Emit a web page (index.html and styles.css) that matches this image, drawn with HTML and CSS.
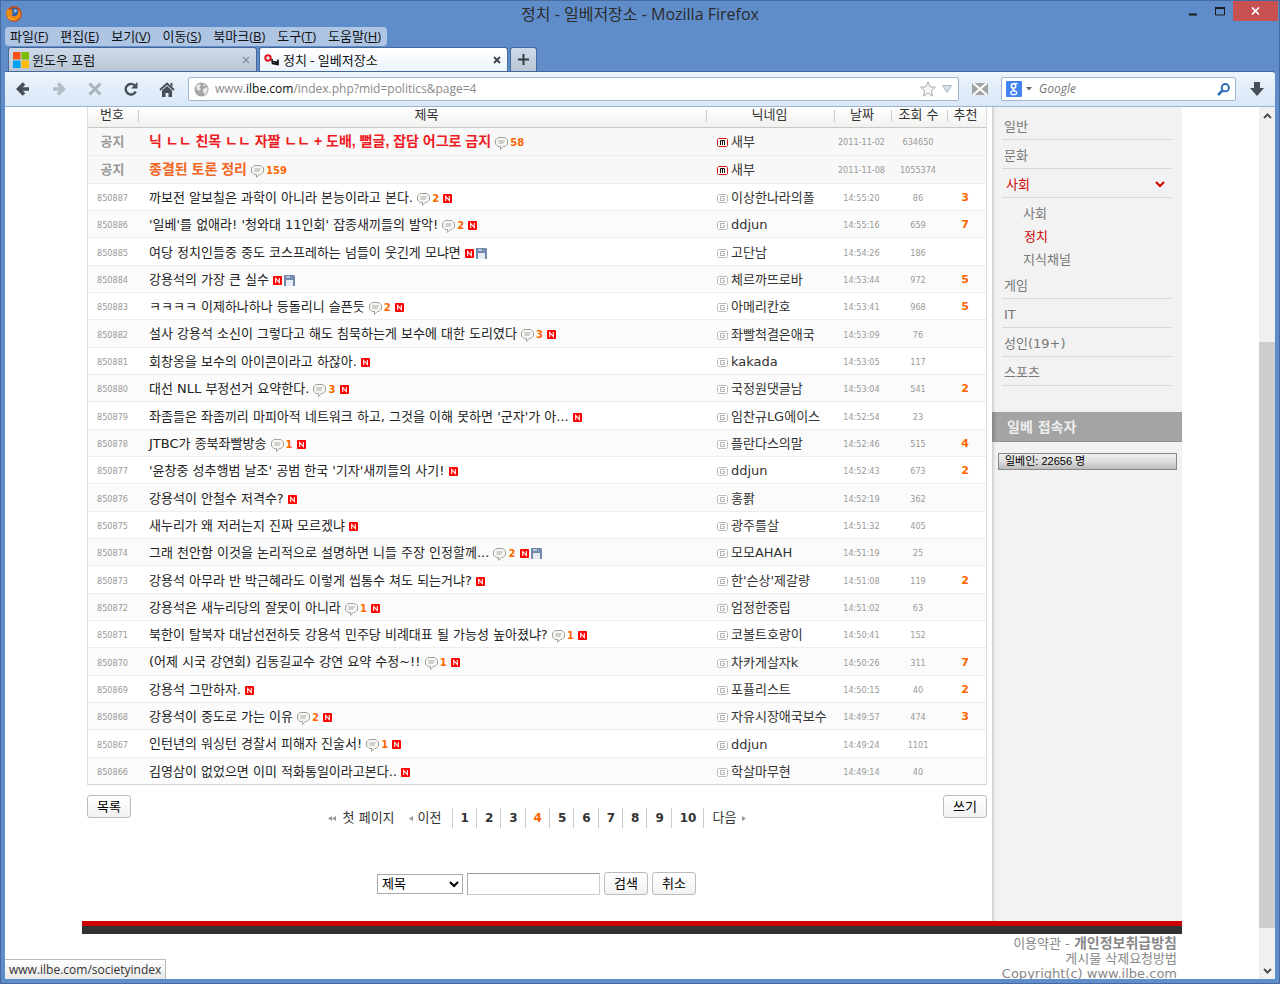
FILE: index.html
```html
<!DOCTYPE html>
<html lang="ko">
<head>
<meta charset="utf-8">
<title>정치 - 일베저장소</title>
<link rel="stylesheet" href="styles.css">
</head>
<body>
<svg class="defs" aria-hidden="true">
  <symbol id="talk" viewBox="0 0 13 13"><path d="M3 .5h7l2.500 2.500v4L10 9.500H8.500L5.500 12.300V9.500H3L.5 7V3z" fill="#f5f5f1" stroke="#a2a29e"/><path d="M3.500 4h6M3.500 6h5" stroke="#a8a8a8"/></symbol>
  <symbol id="new" viewBox="0 0 9 9"><rect width="9" height="9" rx="1" fill="#f00"/><path d="M2.700 7V2.500L6.300 6.500V2" fill="none" stroke="#fff" stroke-width="1.100"/></symbol>
  <symbol id="disk" viewBox="0 0 11 11"><path d="M0 0h10l1 1v10H0z" fill="#7089ad"/><path d="M2 1h6v2H2z" fill="#b9c7da"/><path d="M2 5h7v6H2z" fill="#e6ecf4"/><path d="M6 1h1.500v1.500H6z" fill="#46628c"/></symbol>
  <symbol id="g" viewBox="0 0 11 9"><path d="M1.500.5h8l1 1v6l-1 1h-8l-1-1v-6z" fill="#fff" stroke="#bbb"/><path d="M8 2.500H3.500v4h4v-2H5.500" fill="none" stroke="#b2b2b2"/></symbol>
  <symbol id="m" viewBox="0 0 11 9"><path d="M1.500.5h8l1 1v6l-1 1h-8l-1-1v-6z" fill="#fff" stroke="#e01010"/><path d="M3.500 7V2.500h4V7M5.500 2.500V7" fill="none" stroke="#111"/></symbol>
</svg>

<header class="titlebar">
  <svg class="fox" viewBox="0 0 16 16"><circle cx="8" cy="8" r="7.800" fill="#c9480c"/><circle cx="8.500" cy="7" r="5" fill="#2d5fa8"/><path d="M8 3l3 1-1 3-2-1z" fill="#86bce8"/><path d="M.6 4.500L2 2.500l1 1.500c1-.8 3-.7 4 .2L5.500 6l2 1.500-2 1.200c1 2.200 4 2 5.500.2 1.500-1.500 1.500-4 .5-6 2.500 1.800 4 5 2.500 8-2 4-8 4.700-11 2C0 11 0 7 .6 4.500z" fill="#f08a16"/><path d="M1.500 9c1 3.500 5 5 8.500 3.800-3 2.200-8 1-8.500-3.800z" fill="#fcc842"/></svg>
  <h1>정치 - 일베저장소 - Mozilla Firefox</h1>
  <div class="winbtns">
    <button class="win" aria-label="최소화"><svg width="10" height="10"><path d="M1 8.500h8" stroke="#1b1b1b" stroke-width="2"/></svg></button>
    <button class="win" aria-label="최대화"><svg width="10" height="10"><path d="M.5 1v8h9V1" fill="none" stroke="#1b1b1b"/><path d="M0 2h10" stroke="#1b1b1b" stroke-width="2"/></svg></button>
    <button class="win close" aria-label="닫기"><svg width="9" height="8"><path d="M1 .5l7 7M8 .5l-7 7" stroke="#fff" stroke-width="1.700"/></svg></button>
  </div>
</header>

<nav class="menubar">
  <button>파일(<u>F</u>)</button><button>편집(<u>E</u>)</button><button>보기(<u>V</u>)</button><button>이동(<u>S</u>)</button><button>북마크(<u>B</u>)</button><button>도구(<u>T</u>)</button><button>도움말(<u>H</u>)</button>
</nav>

<div class="tabs">
  <div class="tab">
    <svg width="16" height="16"><path d="M0 0h7.500v7.500H0z" fill="#f65314"/><path d="M8.500 0H16v7.500H8.500z" fill="#7cbb00"/><path d="M0 8.500h7.500V16H0z" fill="#00a1f1"/><path d="M8.500 8.500H16V16H8.500z" fill="#ffbb00"/></svg>
    <span>윈도우 포럼</span>
    <button class="x" aria-label="탭 닫기"><svg width="8" height="8"><path d="M1 1l6 6M7 1L1 7" stroke="#8c97a5" stroke-width="1.500"/></svg></button>
  </div>
  <div class="tab on">
    <svg width="16" height="16"><circle cx="4" cy="6" r="2.700" fill="none" stroke="#e5131d" stroke-width="2"/><path d="M8 7l.5 4.500 5.500 1V7.500M8.500 9.500l5 .8M11.500 9.500v2.500" fill="none" stroke="#111" stroke-width="1.700"/></svg>
    <span>정치 - 일베저장소</span>
    <button class="x" aria-label="탭 닫기"><svg width="8" height="8"><path d="M1 1l6 6M7 1L1 7" stroke="#3c434a" stroke-width="1.800"/></svg></button>
  </div>
  <button class="plus" aria-label="새 탭"><svg width="11" height="11"><path d="M5.500 0v11M0 5.500h11" stroke="#333b44" stroke-width="2"/></svg></button>
</div>

<div class="toolbar">
  <button class="tool" aria-label="뒤로"><svg width="14" height="14"><path d="M13 7H4M8 1.500L2.500 7 8 12.500" fill="none" stroke="#454e59" stroke-width="3.600"/></svg></button>
  <button class="tool" aria-label="앞으로"><svg width="14" height="14"><path d="M1 7h9M6 1.500L11.500 7 6 12.500" fill="none" stroke="#b2bdc9" stroke-width="3.400"/></svg></button>
  <button class="tool" aria-label="중지"><svg width="14" height="14"><path d="M1.500 1.500l11 11M12.500 1.500l-11 11" stroke="#a9b3bf" stroke-width="3"/></svg></button>
  <button class="tool" aria-label="새로 고침"><svg width="14" height="14"><path d="M10.500 3.200A5.300 5.300 0 1 0 11.800 9.500" fill="none" stroke="#454e59" stroke-width="2.400"/><path d="M13.500 0v6.500H7z" fill="#454e59"/></svg></button>
  <button class="tool" aria-label="홈"><svg width="16" height="15"><path d="M1 8l7-6.500L15 8" fill="none" stroke="#454e59" stroke-width="2"/><path d="M3 8.500l5-4.600 5 4.600V15H9.500v-4h-3v4H3zM11.500 1H13.500v4l-2-2z" fill="#454e59"/></svg></button>
  <div class="field url">
    <svg width="15" height="15"><circle cx="7.500" cy="7.500" r="7" fill="#a5a5a5"/><path d="M2 4c2-2 4-2 5-1L5.500 5.500 7 7 5 9 2.500 7zM9 7l4-2 .8 3-2.500 5L9 10zM9 1.500l3 2-2 1z" fill="#e6e6e6"/></svg>
    <span class="address">www.<b>ilbe.com</b>/index.php?mid=politics&amp;page=4</span>
    <svg width="16" height="16"><path d="M8 1l2.100 4.800 5.200.5-3.900 3.500 1.100 5.200L8 12.300 3.500 15l1.100-5.200L.7 6.300l5.200-.5z" fill="#f8f8f8" stroke="#aaa"/></svg>
    <svg width="10" height="8"><path d="M.5 .5h9L5 7.500z" fill="#d7e0eb" stroke="#aeb6c2"/></svg>
  </div>
  <svg class="mailicon" width="16" height="12"><path d="M0 0h16v12H0z" fill="#a3a3a3"/><path d="M1 0l14 12M15 0L1 12" stroke="#fff" stroke-width="2"/></svg>
  <div class="field search">
    <svg width="16" height="16"><rect width="16" height="16" rx="1" fill="#4384f3"/><circle cx="7.500" cy="5" r="2.200" fill="none" stroke="#fff" stroke-width="1.500"/><path d="M8.500 2.700h3M8 7.500L7 8.500l2 1.500" fill="none" stroke="#fff" stroke-width="1.200"/><ellipse cx="7.700" cy="11.700" rx="3" ry="1.900" fill="none" stroke="#fff" stroke-width="1.300"/></svg>
    <svg width="6" height="4"><path d="M0 0h6L3 3.500z" fill="#666"/></svg>
    <input type="text" placeholder="Google" aria-label="Google 검색">
    <svg width="13" height="13"><circle cx="8.300" cy="4.700" r="3.600" fill="none" stroke="#2c6fb5" stroke-width="2"/><path d="M5.500 7.500L1 12" stroke="#2c6fb5" stroke-width="2.500"/></svg>
  </div>
  <button class="tool down" aria-label="다운로드"><svg width="14" height="14"><path d="M4 0h6v6h4L7 14 0 6h4z" fill="#454e59"/></svg></button>
</div>

<div class="view">
  <div class="scroller">
    <div class="page">
      <main class="board">
        <table>
          <colgroup><col class="c-no"><col><col class="c-nick"><col class="c-date"><col class="c-hit"><col class="c-vote"></colgroup>
          <thead><tr><th>번호</th><th>제목</th><th>닉네임</th><th>날짜</th><th>조회 수</th><th>추천</th></tr></thead>
          <tbody class="notice">
            <tr><td>공지</td><td><a class="red" href="#">닉 ㄴㄴ 친목 ㄴㄴ 자짤 ㄴㄴ + 도배, 뻘글, 잡담 어그로 금지</a> <svg class="talk"><use href="#talk"/></svg><b>58</b></td><td><svg class="lv"><use href="#m"/></svg>새부</td><td>2011-11-02</td><td>634650</td><td></td></tr>
            <tr><td>공지</td><td><a class="orange" href="#">종결된 토론 정리</a> <svg class="talk"><use href="#talk"/></svg><b>159</b></td><td><svg class="lv"><use href="#m"/></svg>새부</td><td>2011-11-08</td><td>1055374</td><td></td></tr>
          </tbody>
          <tbody class="posts">
            <tr><td>850887</td><td><a href="#">까보전 알보칠은 과학이 아니라 본능이라고 본다.</a> <svg class="talk"><use href="#talk"/></svg><b>2</b> <svg class="new"><use href="#new"/></svg></td><td><svg class="lv"><use href="#g"/></svg>이상한나라의폴</td><td>14:55:20</td><td>86</td><td>3</td></tr>
            <tr><td>850886</td><td><a href="#">'일베'를 없애라! '청와대 11인회' 잡종새끼들의 발악!</a> <svg class="talk"><use href="#talk"/></svg><b>2</b> <svg class="new"><use href="#new"/></svg></td><td><svg class="lv"><use href="#g"/></svg>ddjun</td><td>14:55:16</td><td>659</td><td>7</td></tr>
            <tr><td>850885</td><td><a href="#">여당 정치인들중 중도 코스프레하는 넘들이 웃긴게 모냐면</a> <svg class="new"><use href="#new"/></svg><svg class="disk"><use href="#disk"/></svg></td><td><svg class="lv"><use href="#g"/></svg>고단남</td><td>14:54:26</td><td>186</td><td></td></tr>
            <tr><td>850884</td><td><a href="#">강용석의 가장 큰 실수</a> <svg class="new"><use href="#new"/></svg><svg class="disk"><use href="#disk"/></svg></td><td><svg class="lv"><use href="#g"/></svg>체르까뜨로바</td><td>14:53:44</td><td>972</td><td>5</td></tr>
            <tr><td>850883</td><td><a href="#">ㅋㅋㅋㅋ 이제하나하나 등돌리니 슬픈듯</a> <svg class="talk"><use href="#talk"/></svg><b>2</b> <svg class="new"><use href="#new"/></svg></td><td><svg class="lv"><use href="#g"/></svg>아메리칸호</td><td>14:53:41</td><td>968</td><td>5</td></tr>
            <tr><td>850882</td><td><a href="#">설사 강용석 소신이 그렇다고 해도 침묵하는게 보수에 대한 도리였다</a> <svg class="talk"><use href="#talk"/></svg><b>3</b> <svg class="new"><use href="#new"/></svg></td><td><svg class="lv"><use href="#g"/></svg>좌빨척결은애국</td><td>14:53:09</td><td>76</td><td></td></tr>
            <tr><td>850881</td><td><a href="#">회창옹을 보수의 아이콘이라고 하잖아.</a> <svg class="new"><use href="#new"/></svg></td><td><svg class="lv"><use href="#g"/></svg>kakada</td><td>14:53:05</td><td>117</td><td></td></tr>
            <tr><td>850880</td><td><a href="#">대선 NLL 부정선거 요약한다.</a> <svg class="talk"><use href="#talk"/></svg><b>3</b> <svg class="new"><use href="#new"/></svg></td><td><svg class="lv"><use href="#g"/></svg>국정원댓글남</td><td>14:53:04</td><td>541</td><td>2</td></tr>
            <tr><td>850879</td><td><a href="#">좌좀들은 좌좀끼리 마피아적 네트워크 하고, 그것을 이해 못하면 '군자'가 아...</a> <svg class="new"><use href="#new"/></svg></td><td><svg class="lv"><use href="#g"/></svg>임찬규LG에이스</td><td>14:52:54</td><td>23</td><td></td></tr>
            <tr><td>850878</td><td><a href="#">JTBC가 종북좌빨방송</a> <svg class="talk"><use href="#talk"/></svg><b>1</b> <svg class="new"><use href="#new"/></svg></td><td><svg class="lv"><use href="#g"/></svg>플란다스의말</td><td>14:52:46</td><td>515</td><td>4</td></tr>
            <tr><td>850877</td><td><a href="#">'윤창중 성추행범 날조' 공범 한국 '기자'새끼들의 사기!</a> <svg class="new"><use href="#new"/></svg></td><td><svg class="lv"><use href="#g"/></svg>ddjun</td><td>14:52:43</td><td>673</td><td>2</td></tr>
            <tr><td>850876</td><td><a href="#">강용석이 안철수 저격수?</a> <svg class="new"><use href="#new"/></svg></td><td><svg class="lv"><use href="#g"/></svg>홍퐑</td><td>14:52:19</td><td>362</td><td></td></tr>
            <tr><td>850875</td><td><a href="#">새누리가 왜 저러는지 진짜 모르겠냐</a> <svg class="new"><use href="#new"/></svg></td><td><svg class="lv"><use href="#g"/></svg>광주를살</td><td>14:51:32</td><td>405</td><td></td></tr>
            <tr><td>850874</td><td><a href="#">그래 천안함 이것을 논리적으로 설명하면 니들 주장 인정할께...</a> <svg class="talk"><use href="#talk"/></svg><b>2</b> <svg class="new"><use href="#new"/></svg><svg class="disk"><use href="#disk"/></svg></td><td><svg class="lv"><use href="#g"/></svg>모모AHAH</td><td>14:51:19</td><td>25</td><td></td></tr>
            <tr><td>850873</td><td><a href="#">강용석 아무라 반 박근혜라도 이렇게 씹통수 쳐도 되는거냐?</a> <svg class="new"><use href="#new"/></svg></td><td><svg class="lv"><use href="#g"/></svg>한'슨상'제갈량</td><td>14:51:08</td><td>119</td><td>2</td></tr>
            <tr><td>850872</td><td><a href="#">강용석은 새누리당의 잘못이 아니라</a> <svg class="talk"><use href="#talk"/></svg><b>1</b> <svg class="new"><use href="#new"/></svg></td><td><svg class="lv"><use href="#g"/></svg>엄정한중립</td><td>14:51:02</td><td>63</td><td></td></tr>
            <tr><td>850871</td><td><a href="#">북한이 탈북자 대남선전하듯 강용석 민주당 비례대표 될 가능성 높아졌냐?</a> <svg class="talk"><use href="#talk"/></svg><b>1</b> <svg class="new"><use href="#new"/></svg></td><td><svg class="lv"><use href="#g"/></svg>코볼트호랑이</td><td>14:50:41</td><td>152</td><td></td></tr>
            <tr><td>850870</td><td><a href="#">(어제 시국 강연회) 김동길교수 강연 요약 수정~!!</a> <svg class="talk"><use href="#talk"/></svg><b>1</b> <svg class="new"><use href="#new"/></svg></td><td><svg class="lv"><use href="#g"/></svg>차카게살자k</td><td>14:50:26</td><td>311</td><td>7</td></tr>
            <tr><td>850869</td><td><a href="#">강용석 그만하자.</a> <svg class="new"><use href="#new"/></svg></td><td><svg class="lv"><use href="#g"/></svg>포퓰리스트</td><td>14:50:15</td><td>40</td><td>2</td></tr>
            <tr><td>850868</td><td><a href="#">강용석이 중도로 가는 이유</a> <svg class="talk"><use href="#talk"/></svg><b>2</b> <svg class="new"><use href="#new"/></svg></td><td><svg class="lv"><use href="#g"/></svg>자유시장애국보수</td><td>14:49:57</td><td>474</td><td>3</td></tr>
            <tr><td>850867</td><td><a href="#">인턴년의 워싱턴 경찰서 피해자 진술서!</a> <svg class="talk"><use href="#talk"/></svg><b>1</b> <svg class="new"><use href="#new"/></svg></td><td><svg class="lv"><use href="#g"/></svg>ddjun</td><td>14:49:24</td><td>1101</td><td></td></tr>
            <tr><td>850866</td><td><a href="#">김영삼이 없었으면 이미 적화통일이라고본다..</a> <svg class="new"><use href="#new"/></svg></td><td><svg class="lv"><use href="#g"/></svg>학살마무현</td><td>14:49:14</td><td>40</td><td></td></tr>
          </tbody>
        </table>
        <div class="under">
          <button class="btn">목록</button>
          <nav class="pages">
            <a class="word" href="#"><svg width="8" height="5"><path d="M4 0v5L0 2.500zM8 0v5L4 2.500z" fill="#999"/></svg>첫 페이지</a>
            <a class="word" href="#"><svg width="4" height="5"><path d="M4 0v5L0 2.500z" fill="#999"/></svg>이전</a>
            <div class="nums"><a href="#">1</a><a href="#">2</a><a href="#">3</a><a class="cur" href="#">4</a><a href="#">5</a><a href="#">6</a><a href="#">7</a><a href="#">8</a><a href="#">9</a><a href="#">10</a></div>
            <a class="word" href="#">다음<svg width="4" height="5"><path d="M0 0v5L4 2.500z" fill="#999"/></svg></a>
          </nav>
          <button class="btn">쓰기</button>
        </div>
        <form class="find">
          <select aria-label="검색 대상"><option>제목</option></select>
          <input type="text" aria-label="검색어">
          <button class="btn" type="button">검색</button>
          <button class="btn" type="button">취소</button>
        </form>
      </main>
      <aside>
        <ul class="menu">
          <li><a href="#">일반</a></li>
          <li><a href="#">문화</a></li>
          <li class="open"><a href="#">사회<svg width="10" height="7"><path d="M1 1l4 4 4-4" fill="none" stroke="#d00000" stroke-width="2"/></svg></a>
            <ul><li><a href="#">사회</a></li><li><a class="sel" href="#">정치</a></li><li><a href="#">지식채널</a></li></ul></li>
          <li><a href="#">게임</a></li>
          <li><a href="#">IT</a></li>
          <li><a href="#">성인(19+)</a></li>
          <li><a href="#">스포츠</a></li>
        </ul>
        <h2>일베 접속자</h2>
        <button class="count">일베인: 22656 명</button>
      </aside>
    </div>
    <footer>
      <p><a href="#">이용약관</a> - <a href="#"><b>개인정보취급방침</b></a></p>
      <p><a href="#">게시물 삭제요청방법</a></p>
      <p>Copyright(c) www.ilbe.com</p>
    </footer>
  </div>
  <div class="scrollbar">
    <svg width="9" height="6"><path d="M1 5l3.500-3.500L8 5" fill="none" stroke="#505050" stroke-width="2"/></svg>
    <div class="track"><div class="thumb"></div></div>
    <svg width="9" height="6"><path d="M1 1l3.500 3.500L8 1" fill="none" stroke="#505050" stroke-width="2"/></svg>
  </div>
  <div class="status">www.ilbe.com/societyindex</div>
</div>
</body>
</html>
```
FILE: styles.css
```css
* { box-sizing: border-box; }
body {
  margin: 0;
  height: 100vh;
  display: flex;
  flex-direction: column;
  padding: 0 4px 4px 4px;
  background: #5f8dc9;
  border: 1px solid #456a9f;
  overflow: hidden;
  font: 13px/16px "DejaVu Sans", "Noto Sans CJK KR", sans-serif;
  color: #333;
}
button, input, select { font: inherit; color: inherit; margin: 0; padding: 0; border: 0; background: none; }
svg { flex: none; }
a { color: inherit; text-decoration: none; }
ul { list-style: none; margin: 0; padding: 0; }
p { margin: 0; }
.defs { position: absolute; width: 0; height: 0; }

.titlebar {
  display: grid;
  grid-template-columns: 1fr auto 1fr;
  align-items: center;
  height: 26px;
  flex: none;
  font-family: "Open Sans", "Noto Sans CJK KR", sans-serif;
}
.fox { width: 16px; height: 16px; margin-left: 1px; }
h1 { margin: 0; font-size: 16px; line-height: 24px; font-weight: 400; color: #2b2b2b; }
.winbtns { display: flex; justify-content: flex-end; align-self: start; margin-right: -3px; }
.win { width: 27px; height: 20px; display: flex; align-items: center; justify-content: center; }
.close { width: 45px; background: #c75050; }

.menubar {
  display: flex;
  gap: 12px;
  align-self: flex-start;
  flex: none;
  height: 19px;
  padding: 0 6px 0 5px;
  border-radius: 4px;
  background: #afc5e4;
  font: 13px/19px "Open Sans", "Noto Sans CJK KR", sans-serif;
  color: #111;
}

.tabs { display: flex; gap: 2px; flex: none; height: 25px; padding: 1px 3px 0; }
.tab {
  display: flex;
  align-items: center;
  gap: 3px;
  width: 249px;
  padding: 0 6px 0 4px;
  border: 1px solid #45679a;
  border-bottom: 0;
  border-radius: 3px 3px 0 0;
  background: linear-gradient(#cedae9, #b9c6d4);
  font: 13px/20px "Noto Sans", "Noto Sans CJK KR", sans-serif;
  color: #111;
}
.tab span { flex: 1; }
.tab.on { background: linear-gradient(#fff, #ebf3fc); }
.x { display: flex; }
.plus {
  width: 27px;
  display: flex;
  align-items: center;
  justify-content: center;
  border: 1px solid #45679a;
  border-bottom: 0;
  border-radius: 3px 3px 0 0;
  background: linear-gradient(#cedae9, #b9c6d4);
}

.toolbar {
  display: flex;
  align-items: center;
  flex: none;
  height: 36px;
  padding: 0 9px 0 0;
  border-top: 1px solid #45679a;
  border-bottom: 1px solid #9cb2d0;
  background: linear-gradient(#edf4fc, #d9e7f7);
  border-radius: 0 3px 0 0;
}
.tool { width: 36px; display: flex; justify-content: center; }
.field {
  display: flex;
  align-items: center;
  gap: 6px;
  height: 24px;
  border: 1px solid #a3b5cd;
  border-radius: 2px;
  background: #fff;
  font: 12px/20px "Open Sans", "Noto Sans CJK KR", sans-serif;
}
.url { flex: 1; padding: 0 6px 0 5px; margin-left: 3px; }
.address { flex: 1; color: #8a8a8a; white-space: nowrap; }
.address b { font-weight: 400; color: #111; }
.mailicon { margin: 0 13px; }
.search { width: 235px; padding: 0 5px 0 4px; gap: 4px; }
.search input { flex: 1; min-width: 0; padding-left: 3px; outline: 0; }
.search input::placeholder { color: #777; font-style: italic; opacity: 1; }
.down { width: 26px; margin: 0 -4px 0 8px; }

.view { position: relative; flex: 1; min-height: 0; display: flex; background: #fff; }
.scroller { flex: 1; min-width: 0; overflow: hidden; }
.page { display: flex; width: 1100px; max-width: 100%; margin: 0 auto; padding-bottom: 5px; border-bottom: 8px solid #333; box-shadow: inset 0 -5px #c00; }
.board { flex: 1; min-width: 0; padding: 0 5px 26px; }

table { width: 100%; table-layout: fixed; border-collapse: separate; border-spacing: 0; border: 1px solid #ddd; border-top: 0; border-bottom-color: #d4d4d0; }
.c-no { width: 51px; }
.c-nick { width: 128px; }
.c-date { width: 57px; }
.c-hit { width: 56px; }
.c-vote { width: 38px; }
th {
  height: 21px;
  padding: 0 0 4px;
  font-weight: 400;
  line-height: 16px;
  border-bottom: 1px solid #c8c8c8;
  background: linear-gradient(#ccc, #ccc) right 3px / 1px 12px no-repeat, linear-gradient(#fff, #f1f1ef);
}
th:nth-child(1) { padding-right: 3px; }
th:nth-child(2) { padding-left: 7px; }
th:nth-child(n+3) { padding-right: 3px; }
th:last-child { background: linear-gradient(#fff, #f1f1ef); }
td { height: 27px; padding: 2px 0 0; text-align: center; border-bottom: 1px solid #ededed; line-height: 16px; white-space: nowrap; }
.notice td { height: 28px; background: #f8f8f8; }
.posts tr:nth-child(3n) td { height: 28px; }
.posts tr:nth-child(even) td { background: #fbfbfb; }
.posts tr:last-child td { border-bottom: 0; height: 26px; }
td:nth-child(1), td:nth-child(4), td:nth-child(5) { font: 9px/16px "DejaVu Sans Condensed", "DejaVu Sans", sans-serif; color: #999; }
td:nth-child(1) { padding-right: 2px; }
.notice td { padding-top: 1px; }
.notice td:nth-child(1) { font: bold 13px/16px "DejaVu Sans", "Noto Sans CJK KR", sans-serif; }
td:nth-child(2) { text-align: left; padding-left: 10px; color: #222; }
td:nth-child(3) { text-align: left; padding-left: 10px; }
td:nth-child(4), td:nth-child(5) { padding-right: 4px; }
td:nth-child(6) { padding-right: 4px; font-size: 11px; font-weight: 700; color: #f60; }
td b { font-size: 10px; color: #f60; }
.red, .orange { font: bold 14px/16px "Liberation Sans", "Noto Sans CJK KR", sans-serif; color: #ed1c24; }
.orange { color: #f26522; }
.talk { width: 13px; height: 13px; margin-right: 2px; vertical-align: -4px; }
.new { width: 9px; height: 9px; vertical-align: -1px; }
.disk { width: 11px; height: 11px; margin-left: 2px; vertical-align: -2px; }
.lv { width: 11px; height: 9px; margin-right: 3px; vertical-align: -1px; }

.btn {
  height: 23px;
  padding: 0 9px;
  border: 1px solid #bbb;
  border-radius: 3px;
  background: linear-gradient(#fff, #f2f2f2);
  line-height: 20px;
  color: #000;
}
.under { display: flex; justify-content: space-between; align-items: flex-start; padding-top: 10px; }
.pages { display: flex; align-items: center; padding-top: 13px; }
.word { display: flex; align-items: center; gap: 7px; margin-right: 14px; }
.word + .word { gap: 5px; margin-right: 10px; }
.nums + .word { gap: 6px; margin: 0 0 0 8px; }
.nums { display: flex; border-right: 1px solid #ccc; }
.nums a { min-width: 24px; padding: 0 7px 0 8px; border-left: 1px solid #ccc; font-size: 12px; line-height: 20px; font-weight: 700; text-align: center; }
.nums .cur { color: #f60; }
.find { display: flex; justify-content: center; align-items: center; gap: 4px; padding: 44px 1px 0 0; }
.find select { width: 86px; height: 20px; border: 1px solid #aaa; background: #fff; line-height: 18px; color: #000; }
.find input { width: 133px; height: 22px; border: 1px solid #ccc; border-top-color: #999; border-left-color: #aaa; background: #fff; }

aside { width: 190px; background: linear-gradient(90deg, #ccc, #e4e4e4 2px, #f2f2f2 4px); color: #777; }
.menu { padding: 4px 10px 0; }
.menu > li > a { display: flex; justify-content: space-between; align-items: center; height: 29px; padding: 3px 7px 0 2px; border-bottom: 1px solid #d8d8d8; }
.menu > .open > a { padding-left: 4px; color: #d00000; }
.menu ul { padding: 3px 0 0 21px; }
.menu ul li { height: 23px; line-height: 25px; }
.menu .sel { padding-left: 1px; color: #d00000; }
h2 { margin: 26px 0 11px; height: 30px; padding-left: 15px; font-size: 14px; line-height: 30px; background: linear-gradient(90deg, #858585, #a4a4a4 5px); border-bottom: 1px solid #929292; color: #eee; }
.count {
  display: block;
  width: 179px;
  height: 17px;
  margin-left: 6px;
  padding-left: 6px;
  text-align: left;
  border: 1px solid #888;
  background: linear-gradient(#eee, #ddd 50%, #bbb);
  font: 11px/15px "Liberation Sans", "Noto Sans CJK KR", sans-serif;
  color: #000;
}
footer { width: 1100px; max-width: 100%; margin: 0 auto; padding: 2px 5px 0; text-align: right; line-height: 15px; color: #888; }
footer b { font-size: 14px; line-height: 15px; }

.scrollbar { width: 16px; flex: none; display: flex; flex-direction: column; align-items: center; background: #f0f0f0; }
.scrollbar svg { margin: 6px 0 5px; }
.track { flex: 1; width: 100%; display: grid; grid-template-rows: 26fr 70fr 4fr; }
.thumb { grid-row: 2; background: #cdcdcd; }
.status {
  position: absolute;
  left: 0;
  bottom: 0;
  padding: 0 4px;
  border: 1px solid #bbb;
  border-left: 0;
  border-bottom: 0;
  background: linear-gradient(#fff, #e8e8e8);
  font: 12px/19px "Open Sans", sans-serif;
  color: #333;
}
```
